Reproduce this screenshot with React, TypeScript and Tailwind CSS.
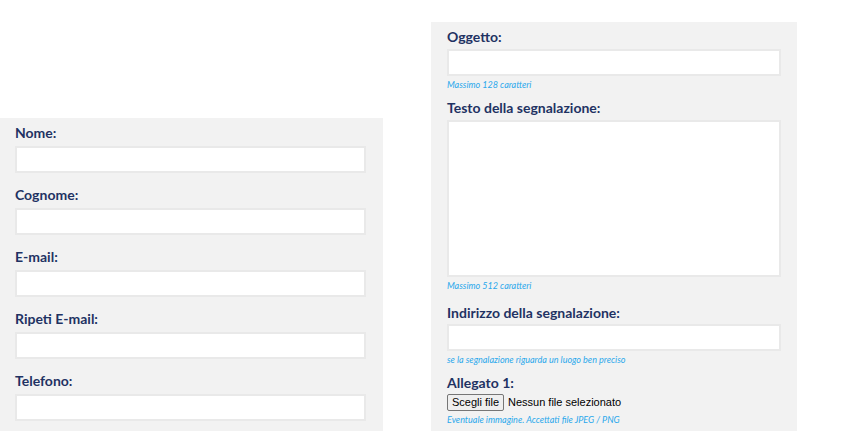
import React from 'react';

const labelCls = "block text-[14px] leading-[20px] font-bold text-[#1f3263]";
const inputCls = "block w-full h-[27px] bg-white border-2 border-[#e9e9e9] outline-none";
const hintCls = "block text-[9px] leading-[12px] italic text-[#2aa8ec]";

const Field: React.FC<{ label: string; first?: boolean }> = ({ label, first }) => (
  <div className={first ? '' : 'mt-[12px]'}>
    <label className={labelCls}>{label}</label>
    <input type="text" className={`${inputCls} mt-[3px]`} />
  </div>
);

export default function App() {
  return (
    <div className="w-[850px] h-[446px] bg-white flex items-start" style={{ fontFamily: 'Lato, "Open Sans", sans-serif' }}>
      {/* Dati personali */}
      <div className="mt-[118px] w-[383px] bg-[#f2f2f2] pl-[15px] pr-[17px] pt-[5px] pb-[10px]">
        <Field label="Nome:" first />
        <Field label="Cognome:" />
        <Field label="E-mail:" />
        <Field label="Ripeti E-mail:" />
        <Field label="Telefono:" />
      </div>

      {/* Segnalazione */}
      <div className="ml-[48px] mt-[22px] w-[366px] bg-[#f2f2f2] pl-[16px] pr-[16px] pt-[5px] pb-[5px]">
        <label className={labelCls}>Oggetto:</label>
        <input type="text" className={`${inputCls} mt-[2px]`} />
        <span className={`${hintCls} mt-[3px]`}>Massimo 128 caratteri</span>

        <label className={`${labelCls} mt-[7px]`}>Testo della segnalazione:</label>
        <textarea className="block w-full h-[157px] mt-[2px] bg-white border-2 border-[#e9e9e9] outline-none resize-none" />
        <span className={`${hintCls} mt-[3px]`}>Massimo 512 caratteri</span>

        <label className={`${labelCls} mt-[11px]`}>Indirizzo della segnalazione:</label>
        <input type="text" className={`${inputCls} mt-[1px]`} />
        <span className={`${hintCls} mt-[3px]`}>se la segnalazione riguarda un luogo ben preciso</span>

        <label className={`${labelCls} mt-[7px]`}>Allegato 1:</label>
        <div className="flex items-center mt-[1px] h-[17px]" style={{ fontFamily: '"Liberation Sans", Arial, sans-serif' }}>
          <button className="h-[17px] w-[57px] bg-[#efefef] border border-[#767676] rounded-[2px] text-[11px] leading-none text-black">
            Scegli file
          </button>
          <span className="ml-[4px] text-[11px] text-black">Nessun file selezionato</span>
        </div>
        <span className={`${hintCls} mt-[3px]`}>Eventuale immagine. Accettati file JPEG / PNG</span>
      </div>
    </div>
  );
}
